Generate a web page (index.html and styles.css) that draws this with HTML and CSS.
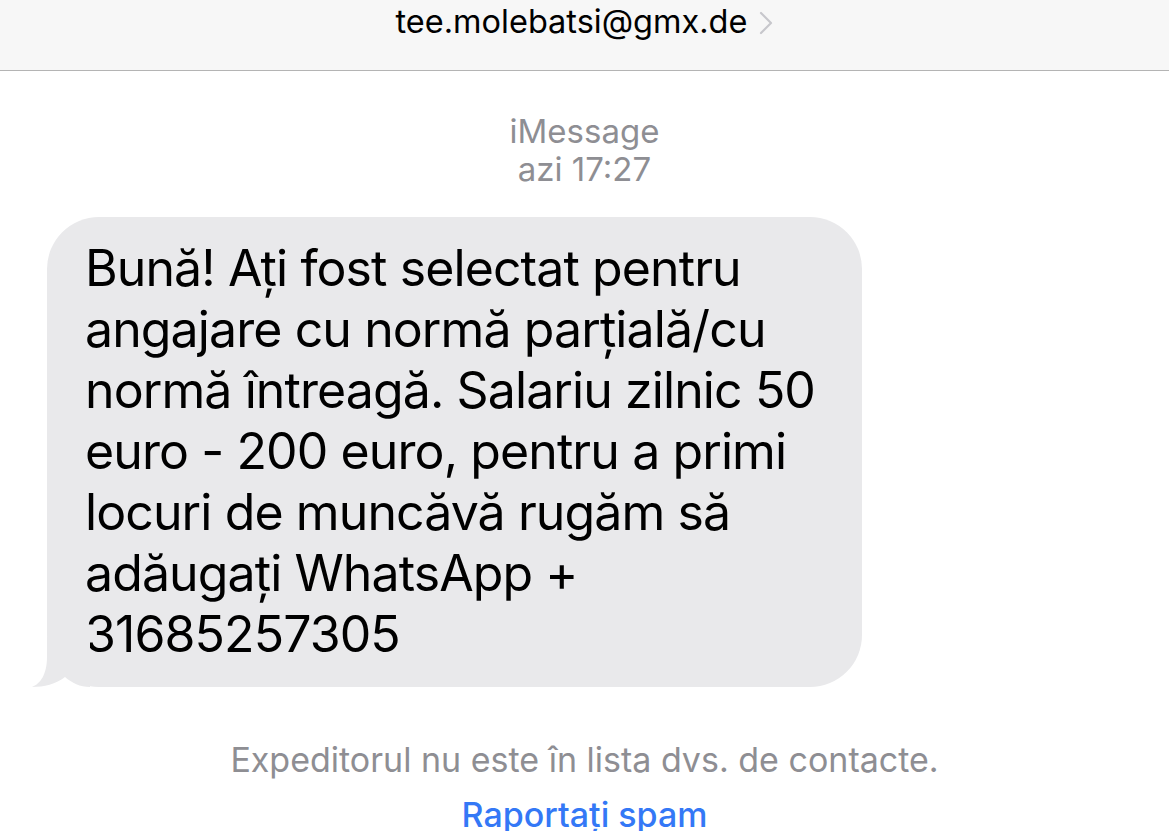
FILE: index.html
```html
<!DOCTYPE html>
<html lang="ro">
<head>
    <meta charset="UTF-8">
    <meta name="viewport" content="width=device-width, initial-scale=1.0">
    <title>Mesaje</title>
    <link rel="stylesheet" href="styles.css">
</head>
<body>
    <header class="nav">
        <div class="contact">
            <span class="address">tee.molebatsi@gmx.de</span>
            <svg class="chevron" width="14" height="24" viewBox="0 0 14 24">
                <path d="M2 2 L12 12 L2 22" fill="none" stroke="#c7c7cc" stroke-width="2.2" stroke-linecap="round" stroke-linejoin="round"/>
            </svg>
        </div>
    </header>

    <main class="thread">
        <div class="stamp">
            <div>iMessage</div>
            <div>azi 17:27</div>
        </div>

        <div class="row">
            <div class="bubble">
                <p>Bună! Ați fost selectat pentru angajare cu normă parțială/cu normă întreagă. Salariu zilnic 50 euro - 200 euro, pentru a primi locuri de muncăvă rugăm să adăugați WhatsApp + 31685257305</p>
                <svg class="tail" width="60" height="50" viewBox="0 0 60 50">
                    <path d="M17 0 L17 20 C17 38 10 47 2 50 C14 50 26 47 35 40 C42 46 50 50 60 50 L60 0 Z" fill="#e9e9eb"/>
                </svg>
            </div>
        </div>

        <p class="notice">Expeditorul nu este în lista dvs. de contacte.</p>
        <a class="spam" href="#">Raportați spam</a>
    </main>
</body>
</html>
```

FILE: styles.css
```css
body {
    margin: 0;
    background: #fff;
    font-family: Inter, "Noto Sans", sans-serif;
    color: #000;
    overflow: hidden;
}

.nav {
    height: 71px;
    background: #f7f7f7;
    border-bottom: 1px solid #b4b4b4;
    box-sizing: border-box;
}

.contact {
    display: flex;
    justify-content: center;
    align-items: center;
    gap: 12px;
    padding-top: 2px;
}

.address {
    font-size: 32.5px;
}

.chevron {
    margin-top: 2px;
}

.thread {
    display: flex;
    flex-direction: column;
    align-items: center;
    padding-top: 41px;
}

.stamp {
    color: #8e8e93;
    font-size: 33px;
    line-height: 38px;
    text-align: center;
}

.row {
    align-self: stretch;
    padding: 29px 0 0 47px;
}

.bubble {
    position: relative;
    width: 815px;
    box-sizing: border-box;
    background: #e9e9eb;
    border-radius: 52px;
    padding: 21px 24px 22px 38px;
}

.bubble p {
    margin: 0;
    font-size: 50px;
    letter-spacing: -0.9px;
    line-height: 61px;
}

.tail {
    position: absolute;
    left: -17px;
    bottom: 0;
}

.notice {
    margin: 52px 0 0;
    color: #8e8e93;
    font-size: 34px;
}

.spam {
    margin-top: 14px;
    color: #3478f6;
    font-size: 34px;
    font-weight: 500;
    text-decoration: none;
}
```
